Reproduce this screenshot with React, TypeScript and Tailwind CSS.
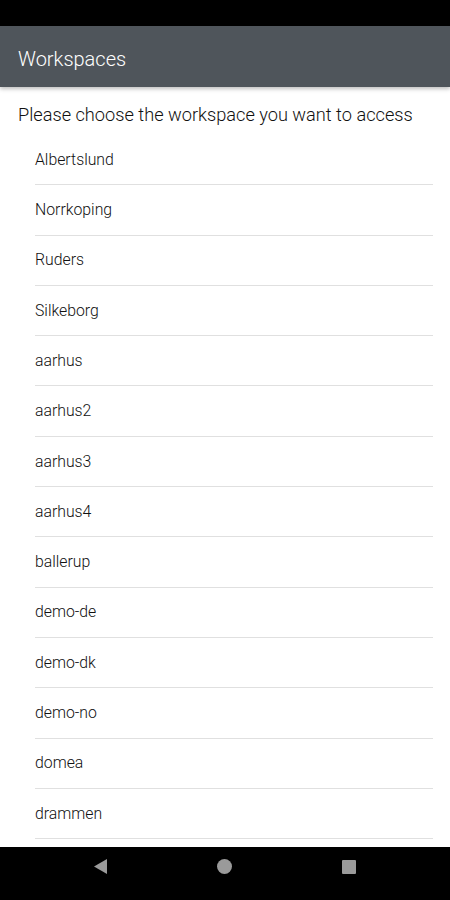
import React from "react";

const items = [
  "Albertslund",
  "Norrkoping",
  "Ruders",
  "Silkeborg",
  "aarhus",
  "aarhus2",
  "aarhus3",
  "aarhus4",
  "ballerup",
  "demo-de",
  "demo-dk",
  "demo-no",
  "domea",
  "drammen",
  "drammen2",
];

export default function App() {
  return (
    <div
      className="relative w-[450px] h-[900px] overflow-hidden bg-white flex flex-col"
      style={{ fontFamily: "Roboto, 'Liberation Sans', sans-serif" }}
    >
      <div className="h-[26px] bg-black shrink-0" />
      <div className="h-[61px] bg-[#4f555b] shrink-0 flex items-center px-[18px] pt-[4px] shadow-[0_2px_4px_rgba(0,0,0,0.25)] z-10">
        <span className="text-white text-[20px] font-light">Workspaces</span>
      </div>
      <div className="flex-1 overflow-hidden">
        <div className="px-[18px] pt-[16px] pb-[8px] text-[18.2px] font-light text-[#111] leading-[24px] whitespace-nowrap">
          Please choose the workspace you want to access
        </div>
        <div className="pl-[35px] pr-[17px]">
          {items.map((name) => (
            <div
              key={name}
              className="h-[50.3px] border-b border-[#e0e0e0] flex items-center text-[15.8px] font-light text-[#111]"
            >
              {name}
            </div>
          ))}
        </div>
      </div>
      <div className="absolute left-0 right-0 bottom-0 h-[53px] bg-black">
        <svg width="14" height="15" viewBox="0 0 14 15" className="absolute left-[94px] top-[12px]">
          <polygon points="13,0 13,15 0,7.5" fill="#9a9a9a" />
        </svg>
        <div className="absolute left-[217px] top-[12px] w-[15px] h-[15px] rounded-full bg-[#9a9a9a]" />
        <div className="absolute left-[342px] top-[13px] w-[14px] h-[14px] rounded-[1px] bg-[#9a9a9a]" />
      </div>
    </div>
  );
}
